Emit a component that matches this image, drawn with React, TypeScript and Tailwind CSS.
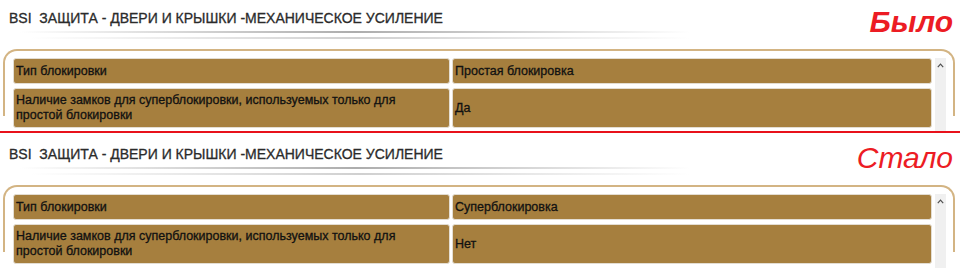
import React from 'react';

type Row = { name: React.ReactNode; value: string; tall?: boolean };

const TITLE = 'BSI  ЗАЩИТА - ДВЕРИ И КРЫШКИ -МЕХАНИЧЕСКОЕ УСИЛЕНИЕ';

function Section({ label, labelClass, rows, topPad }: { label: string; labelClass: string; rows: Row[]; topPad: string }) {
    return (
        <div className={`overflow-hidden ${topPad}`}>
            {/* header */}
            <div className="flex justify-between h-[31px]">
                <h2 className="pl-[9px] pt-[10px] text-[14px] leading-[16px] whitespace-pre text-[#2b2b2b] [-webkit-text-stroke:0.3px_#2b2b2b]">{TITLE}</h2>
                <span className={`pr-[7px] pt-[7px] text-[30px] leading-[30px] italic text-[#ec1c24] ${labelClass}`}>{label}</span>
            </div>
            <div className="ml-[20px] w-[670px] h-[2px] bg-linear-to-r from-white via-[#adadad] to-white" />
            <div className="ml-[30px] mt-[4px] w-[660px] h-[2px] bg-linear-to-r from-white via-[#d0d0d0] to-white" />

            {/* panel */}
            <div className="mt-[10px] ml-[3px] w-[952px] h-[67px] border-2 border-b-0 border-[#d3b483] rounded-t-[14px] pt-[7px] pl-[8px]">
                <div className="flex items-start">
                    <div className="grid grid-cols-[437px_480px] gap-x-[2px] gap-y-[4px] text-[12.5px] leading-[15px] text-[#111] [-webkit-text-stroke:0.3px_#111]">
                        {rows.map((r, i) => (
                            <React.Fragment key={i}>
                                <div className={`flex items-center pl-[2px] bg-[#a67f3e] border border-[#e3ddd2] rounded-[3px] ${r.tall ? 'h-[40px]' : 'h-[26px]'}`}>
                                    {r.name}
                                </div>
                                <div className={`flex items-center pl-[2px] bg-[#a67f3e] border border-[#e3ddd2] rounded-[3px] ${r.tall ? 'h-[40px]' : 'h-[26px]'}`}>
                                    {r.value}
                                </div>
                            </React.Fragment>
                        ))}
                    </div>
                    <div className="ml-[3px] w-[11px] h-[80px] bg-[#f0f0f0] flex justify-center pt-[5px]">
                        <svg width="7" height="5" viewBox="0 0 7 5">
                            <path d="M0.8 4.2 L3.5 1.2 L6.2 4.2" fill="none" stroke="#505050" strokeWidth="1.2" />
                        </svg>
                    </div>
                </div>
            </div>
        </div>
    );
}

export default function App() {
    const name2 = <span>Наличие замков для суперблокировки, используемых только для<br />простой блокировки</span>;

    return (
        <div className="w-[960px] h-[268px] bg-white overflow-hidden" style={{ fontFamily: '"Liberation Sans", Arial, sans-serif' }}>
            <div className="h-[131px]">
                <Section
                    label="Было"
                    labelClass="font-bold"
                    topPad="h-[131px]"
                    rows={[
                        { name: 'Тип блокировки', value: 'Простая блокировка' },
                        { name: name2, value: 'Да', tall: true },
                    ]}
                />
            </div>
            <div className="h-[2px] bg-[#e8111b]" />
            <div className="h-[135px]">
                <Section
                    label="Стало"
                    labelClass="font-normal"
                    topPad="pt-[3px] h-[135px]"
                    rows={[
                        { name: 'Тип блокировки', value: 'Суперблокировка' },
                        { name: name2, value: 'Нет', tall: true },
                    ]}
                />
            </div>
        </div>
    );
}
